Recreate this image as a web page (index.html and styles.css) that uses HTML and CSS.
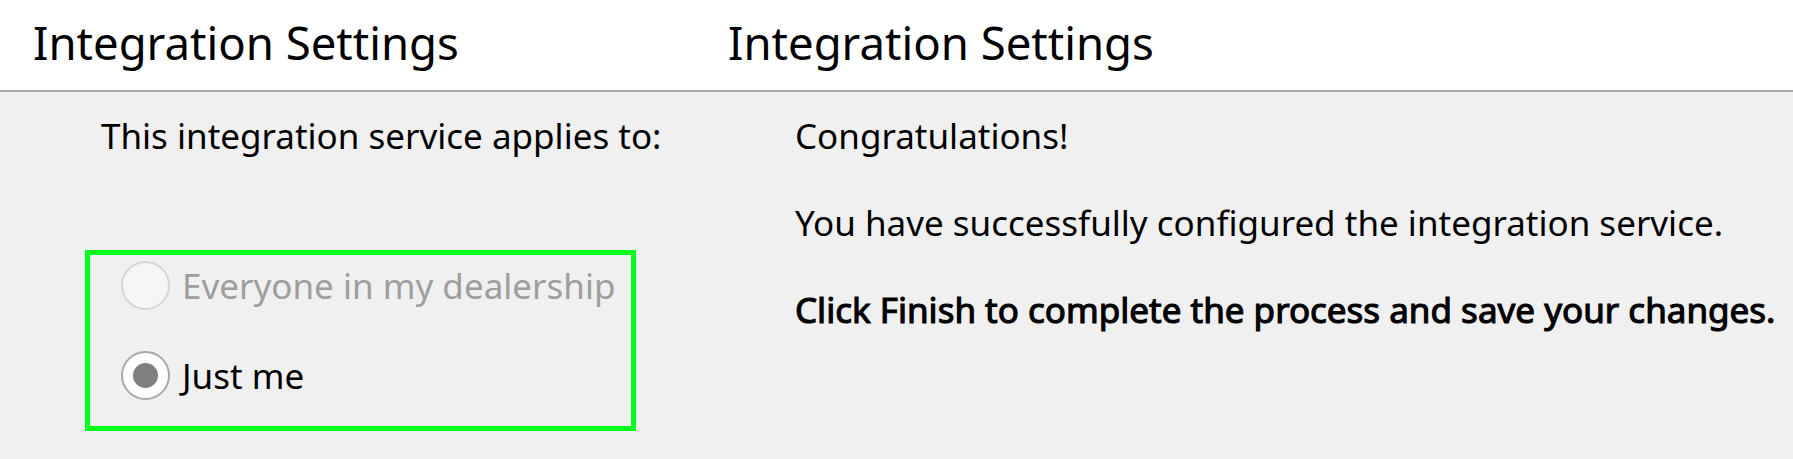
FILE: index.html
```html
<!DOCTYPE html>
<html lang="en">
<head>
<meta charset="utf-8">
<title>Integration Settings</title>
<link rel="stylesheet" href="styles.css">
</head>
<body>
  <header class="header">
    <h1 class="title">Integration Settings</h1>
    <h1 class="title">Integration Settings</h1>
  </header>
  <main class="panels">
    <section class="panel panel-left">
      <p class="text">This integration service applies to:</p>
      <div class="options">
        <label class="option option-disabled">
          <span class="radio radio-disabled"></span>
          <span class="option-label">Everyone in my dealership</span>
        </label>
        <label class="option">
          <span class="radio radio-checked"><span class="dot"></span></span>
          <span class="option-label">Just me</span>
        </label>
      </div>
    </section>
    <section class="panel panel-right">
      <p class="text">Congratulations!</p>
      <p class="text">You have successfully configured the integration service.</p>
      <p class="text text-bold">Click Finish to complete the process and save your changes.</p>
    </section>
  </main>
</body>
</html>
```

FILE: styles.css
```css
* {
  box-sizing: border-box;
}

html, body {
  margin: 0;
  padding: 0;
}

body {
  background: #f0f0f0;
  font-family: "Noto Sans", "Open Sans", sans-serif;
  color: #000;
  width: 1793px;
  height: 459px;
  overflow: hidden;
}

.header {
  display: grid;
  grid-template-columns: 695px 1fr;
  height: 92px;
  background: #fff;
  border-bottom: 2px solid #aca6a6;
}

.title {
  margin: 0;
  padding: 20px 0 0 33px;
  font-size: 45.5px;
  font-weight: 400;
  line-height: 1;
}

.panels {
  display: grid;
  grid-template-columns: 695px 1fr;
}

.panel {
  padding-top: 26px;
}

.text {
  margin: 0;
  font-size: 35px;
  line-height: 1;
}

.panel-left .text {
  padding-left: 101px;
}

.panel-right {
  display: flex;
  flex-direction: column;
  gap: 52px;
  padding-left: 100px;
}

.text-bold {
  font-weight: 400;
  -webkit-text-stroke: 1.1px #000;
}

.options {
  margin: 97px 0 0 85px;
  width: 551px;
  height: 181px;
  border: 5px solid #00ff1e;
  padding: 6px 0 0 31px;
  display: flex;
  flex-direction: column;
  gap: 41px;
}

.option {
  display: flex;
  align-items: center;
  height: 49px;
  font-size: 35px;
  line-height: 1;
}

.option-label {
  margin-left: 12px;
}

.option-disabled .option-label {
  color: #9e9e9e;
}

.radio {
  flex: none;
  width: 49px;
  height: 49px;
  border-radius: 50%;
  display: flex;
  align-items: center;
  justify-content: center;
}

.radio-disabled {
  background: #f6f6f6;
  border: 2px solid #d6d6d6;
}

.radio-checked {
  background: #fff;
  border: 2px solid #a9a9a9;
}

.dot {
  width: 25px;
  height: 25px;
  border-radius: 50%;
  background: #808080;
}
```
